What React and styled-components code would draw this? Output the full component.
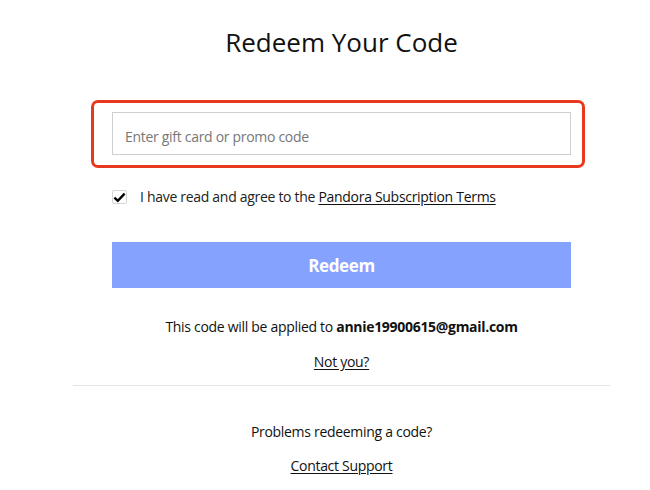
import React from 'react';
import styled, { createGlobalStyle } from 'styled-components';

const GlobalStyle = createGlobalStyle`
  body {
    margin: 0;
    background: #ffffff;
    font-family: 'Open Sans', 'Noto Sans', sans-serif;
    letter-spacing: -0.3px;
    color: #111111;
  }
`;

const Page = styled.main`
  width: 537px;
  margin-left: 73px;
  padding-top: 24px;
`;

const Column = styled.section`
  width: 459px;
  margin: 0 auto;
  display: flex;
  flex-direction: column;
`;

const Title = styled.h1`
  margin: 0 0 40px;
  font-size: 26px;
  font-weight: 400;
  line-height: 36px;
  letter-spacing: 0;
  text-align: center;
  color: #111;
`;

const Highlight = styled.div`
  margin: 0 -14px 0 -21px;
  padding: 9px 11px 10px 18px;
  border: 3px solid #e8391f;
  border-radius: 7px;
`;

const CodeInput = styled.input`
  box-sizing: border-box;
  width: 100%;
  height: 43px;
  padding: 5px 12px 0;
  border: 1px solid #cfcfcf;
  font-family: inherit;
  font-size: 14px;
  letter-spacing: -0.3px;
  color: #111;
  outline: none;

  &::placeholder {
    color: #777;
  }
`;

const AgreeRow = styled.label`
  display: flex;
  align-items: center;
  gap: 13px;
  margin-top: 19px;
  font-size: 14px;
  line-height: 20px;
  color: #222;
`;

const Box = styled.span`
  box-sizing: border-box;
  width: 15px;
  height: 14px;
  border: 1px solid #d6d6d6;
  border-radius: 2px;
  display: flex;
  align-items: center;
  justify-content: center;
`;

const TextLink = styled.a`
  color: #111;
  text-decoration: underline;
  text-underline-offset: 2px;
  cursor: pointer;
`;

const RedeemButton = styled.button`
  margin-top: 35px;
  height: 46px;
  border: none;
  background: #84a2fe;
  color: #fff;
  font-family: inherit;
  font-size: 17px;
  font-weight: 700;
  letter-spacing: -0.4px;
`;

const Note = styled.p`
  margin: ${(p) => p.$top}px 0 0;
  font-size: 14px;
  line-height: 20px;
  text-align: center;
  color: #111;
`;

const Divider = styled.hr`
  margin: 13px 0 0;
  border: none;
  border-top: 1px solid #e4e4e4;
`;

const CheckIcon = () => (
  <svg width="13" height="11" viewBox="0 0 13 11">
    <path d="M1.4 5.6 L4.8 8.9 L11.6 1.6" fill="none" stroke="#000" strokeWidth="2.3" />
  </svg>
);

const App = () => {
  return (
    <>
      <GlobalStyle />
      <Page>
        <Column>
          <Title>Redeem Your Code</Title>
          <Highlight>
            <CodeInput placeholder="Enter gift card or promo code" />
          </Highlight>
          <AgreeRow>
            <Box>
              <CheckIcon />
            </Box>
            <span>
              I have read and agree to the{' '}
              <TextLink>Pandora Subscription Terms</TextLink>
            </span>
          </AgreeRow>
          <RedeemButton>Redeem</RedeemButton>
          <Note $top={29}>
            This code will be applied to <b>annie19900615@gmail.com</b>
          </Note>
          <Note $top={15}>
            <TextLink>Not you?</TextLink>
          </Note>
        </Column>
        <Divider />
        <Column>
          <Note $top={36}>Problems redeeming a code?</Note>
          <Note $top={14}>
            <TextLink>Contact Support</TextLink>
          </Note>
        </Column>
      </Page>
    </>
  );
};

export default App;
